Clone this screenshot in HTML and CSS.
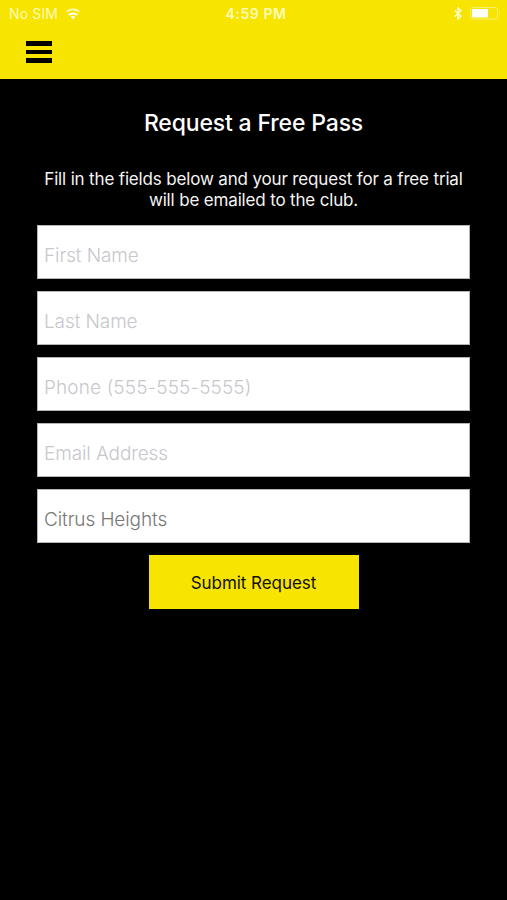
FILE: index.html
```html
<!DOCTYPE html>
<html lang="en">
<head>
    <meta charset="UTF-8">
    <meta name="viewport" content="width=device-width, initial-scale=1.0">
    <title>Request a Free Pass</title>
    <link rel="stylesheet" href="styles.css">
</head>
<body>
    <header class="header">
        <div class="status-bar">
            <div class="status-left">
                <span class="carrier">No SIM</span>
                <svg class="wifi" width="14" height="12" viewBox="0 0 14 12">
                    <path d="M0.8 3.6 Q7 -1 13.2 3.6" fill="none" stroke="#fffbb8" stroke-width="2" />
                    <path d="M2 6.4 Q7 2.4 12 6.4 L10.4 7.8 Q7 5.4 3.6 7.8 Z" fill="#ffffff" />
                    <path d="M4.6 8.8 Q7 7 9.4 8.8 L7 11.2 Z" fill="#ffffff" />
                </svg>
            </div>
            <span class="time">4:59 PM</span>
            <div class="status-right">
                <svg class="bluetooth" width="8" height="13" viewBox="0 0 8 13">
                    <path d="M0.8 3.6 L7 9.2 L4 12 V1 L7 3.8 L0.8 9.4" fill="none" stroke="#fffcd0" stroke-width="1.4" />
                </svg>
                <svg class="battery" width="31" height="13" viewBox="0 0 31 13">
                    <rect x="0.5" y="0.5" width="27" height="11.5" rx="2" fill="none" stroke="#fbef70" />
                    <rect x="2" y="2" width="16" height="8.5" fill="#ffffff" />
                    <path d="M29 4.2 Q30.6 6.2 29 8.2 Z" fill="#fbef70" />
                </svg>
            </div>
        </div>
        <button type="button" class="menu" aria-label="Menu">
            <span></span>
            <span></span>
            <span></span>
        </button>
    </header>

    <main class="container">
        <h1>Request a Free Pass</h1>
        <p>Fill in the fields below and your request for a free trial<br>will be emailed to the club.</p>
        <form id="freePassForm">
            <input type="text" id="firstName" placeholder="First Name" />
            <input type="text" id="lastName" placeholder="Last Name" />
            <input type="tel" id="phone" placeholder="Phone (555-555-5555)" />
            <input type="email" id="email" placeholder="Email Address" />
            <input type="text" id="club" value="Citrus Heights" />
            <button type="submit" class="submit">Submit Request</button>
        </form>
    </main>
</body>
</html>
```

FILE: styles.css
```css
/* Global Styles */
* {
    box-sizing: border-box;
}

body {
    margin: 0;
    min-height: 100vh;
    font-family: Inter, 'Liberation Sans', sans-serif;
    background: #000;
    color: #fff;
}

/* Header */
.header {
    height: 79px;
    background: #f7e400;
}

.status-bar {
    display: grid;
    grid-template-columns: 1fr auto 1fr;
    align-items: center;
    height: 27px;
    padding: 0 6px 0 9px;
    font-size: 14px;
    color: #fffbb8;
}

.status-left,
.status-right {
    display: flex;
    align-items: center;
}

.status-left {
    gap: 8px;
}

.status-right {
    justify-content: flex-end;
    gap: 8px;
}

.carrier {
    letter-spacing: 0.15px;
}

.time {
    padding-left: 2px;
    font-weight: 600;
    letter-spacing: 0.6px;
}

.menu {
    display: flex;
    flex-direction: column;
    gap: 4px;
    margin: 14px 0 0 26px;
    padding: 0;
    border: none;
    background: none;
}

.menu span {
    width: 26px;
    height: 4.6px;
    background: #000;
}

/* Main Container */
.container {
    padding: 0 37px;
    text-align: center;
}

.container h1 {
    margin: 0;
    padding-top: 30px;
    font-size: 23px;
    font-weight: 500;
    line-height: 28px;
    letter-spacing: -0.16px;
}

.container p {
    margin: 32px 0 15px;
    font-size: 17px;
    line-height: 20.5px;
    letter-spacing: -0.16px;
    color: #f4f4f4;
}

/* Form Styles */
form {
    display: flex;
    flex-direction: column;
    align-items: center;
    gap: 12px;
}

input {
    width: 433px;
    height: 54px;
    padding: 6px 6px 0;
    border: 1px solid #b5b5b5;
    border-radius: 0;
    outline: none;
    background: #fff;
    font-family: inherit;
    font-size: 19px;
    font-weight: 300;
    letter-spacing: -0.1px;
    color: #777;
}

input[type="tel"] {
    letter-spacing: 0.12px;
}

input::placeholder {
    color: #c7c7cc;
}

.submit {
    width: 210px;
    height: 54px;
    padding-top: 3px;
    border: none;
    background: #f7e400;
    font-family: inherit;
    font-size: 17px;
    letter-spacing: -0.05px;
    color: #111;
}
```
